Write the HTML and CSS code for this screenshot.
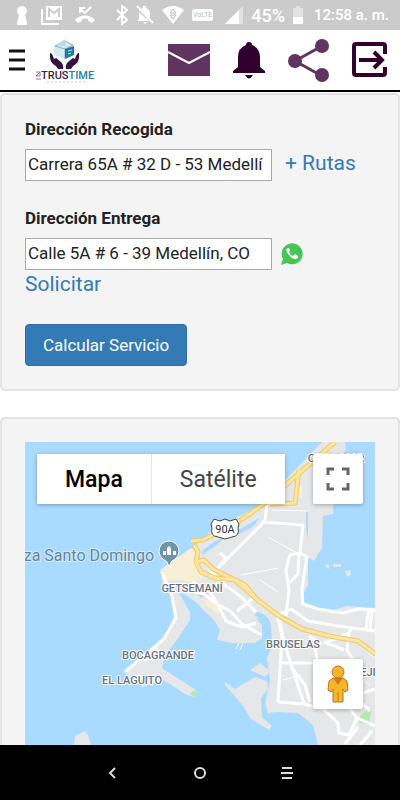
FILE: index.html
```html
<!DOCTYPE html>
<html lang="es">
<head>
    <meta charset="UTF-8">
    <meta name="viewport" content="width=device-width, initial-scale=1.0">
    <title>TrusTime</title>
    <link rel="stylesheet" href="styles.css">
</head>
<body>
    <!-- Status bar -->
    <div class="status-bar">
        <div class="status-left">
            <svg width="14" height="22" viewBox="0 0 14 22"><path d="M4 11a5 5 0 1 1 6 0l2 8v2H2v-2z" fill="#fff"/></svg>
            <svg width="22" height="20" viewBox="0 0 22 20"><path d="M1 4v15h17" fill="none" stroke="#fff" stroke-width="2"/><path d="M5 1h16v14H5z" fill="#fff"/><path d="M8 12V4l5 4 5-4v8" fill="none" stroke="#ccc" stroke-width="2"/></svg>
            <svg width="20" height="20" viewBox="0 0 20 20"><path d="M5 4l5 4 6-6M5 8V3h5" fill="none" stroke="#fff" stroke-width="2"/><path d="M0 15c4-6 16-6 20 0l-3 3-4-2v-2q-3-1-6 0v2l-4 2z" fill="#fff"/></svg>
        </div>
        <div class="status-right">
            <svg width="12" height="20" viewBox="0 0 12 20"><path d="M1 5l10 10-5 4V1l5 4L1 15" fill="none" stroke="#fff" stroke-width="2"/></svg>
            <svg width="18" height="20" viewBox="0 0 18 20"><path d="M3 14V9q0-5 4-6V1h3v2q4 1 4 6v5l2 2H1z M7 17h4l-2 2z" fill="#fff"/><path d="M0 2l18 17" stroke="#ccc" stroke-width="3"/><path d="M1 1l16 17" stroke="#fff" stroke-width="2"/></svg>
            <svg width="22" height="18" viewBox="0 0 22 18"><path d="M0 4q11-8 22 0L11 18z" fill="#fff"/><path d="M8 7l3-4 3 4zM8 9l3 4 3-4z" fill="none" stroke="#bbb"/></svg>
            <span class="volte">VoLTE</span>
            <svg class="signal" width="18" height="18" viewBox="0 0 18 18"><path d="M0 18L18 0v18z" fill="#e2e2e2"/><path d="M0 18L14 4v14z" fill="#fff"/></svg>
            <span class="battery-text">45%</span>
            <svg width="10" height="18" viewBox="0 0 10 18"><path d="M0 2h3V0h4v2h3v16H0z" fill="#e2e2e2"/><path d="M0 11h10v7H0z" fill="#fff"/></svg>
            <span class="clock">12:58 a. m.</span>
        </div>
    </div>

    <!-- App header -->
    <header class="header">
        <div class="brand">
            <button class="icon-button" aria-label="Menu">
                <svg width="16" height="22" viewBox="0 0 16 22"><path d="M0 2h16M0 11h16M0 20h16" stroke="#111" stroke-width="3"/></svg>
            </button>
            <a href="#" class="logo" aria-label="TrusTime">
                <svg width="62" height="45" viewBox="0 0 62 45">
                    <path d="M19 8l9-5 10 4v10l-8 4-11-4z" fill="#d9ebf1"/>
                    <path d="M20 8l10 3 8-4-8-4zM30 11v10" fill="none" stroke="#87afc0"/>
                    <path d="M30 11l9-3v9l-9 4z" fill="#1c7ca5"/>
                    <path d="M22 7l8-6 1 8" fill="#b8dbe7"/>
                    <path d="M33 13l4-1M33 16l3-1" stroke="#c9e8f2"/>
                    <path d="M15 15q2-1 4 6l2-1 5 4q3 3 2 7h-5q-1-3-5-5-4-4-3-11zM44 15q-2-1-4 6l-2-1-5 4q-3 3-2 7h5q1-3 5-5 4-4 3-11z" fill="#32163f"/>
                    <path d="M1 34h4v4H1l4-4M1 41h5" fill="none" stroke="#8a7c96"/>
                    <text x="6" y="41" class="logo-text"><tspan fill="#3c2348">TRUS</tspan><tspan fill="#2483ac">TIME</tspan></text>
                    <path d="M12 44h38" stroke="#ccc" stroke-dasharray="2 2"/>
                </svg>
            </a>
        </div>
        <nav class="actions">
            <a href="#" aria-label="Mensajes">
                <svg width="42" height="32" viewBox="0 0 42 32"><path d="M0 0h42v32H0z" fill="#60345f"/><path d="M0 8l21 11L42 8" fill="none" stroke="#fff" stroke-width="2"/></svg>
            </a>
            <a href="#" aria-label="Notificaciones">
                <svg width="34" height="38" viewBox="0 0 34 38"><path d="M14 4a3 3 0 1 1 6 0q8 3 8 12v10l5 4v2H1v-2l5-4V16q0-9 8-12zM13 34h8q-4 7-8 0z" fill="#32002f"/></svg>
            </a>
            <a href="#" aria-label="Compartir">
                <svg width="42" height="43" viewBox="0 0 42 43"><path d="M34 7L7 22l27 15" fill="none" stroke="#60345f" stroke-width="3"/><g fill="#60345f"><circle cx="7" cy="22" r="7"/><circle cx="34" cy="7" r="7"/><circle cx="34" cy="36" r="7"/></g></svg>
            </a>
            <a href="#" aria-label="Salir">
                <svg width="36" height="36" viewBox="0 0 36 36"><path d="M33 12V4q0-2-2-2H4Q2 2 2 4v27q0 2 2 2h27q2 0 2-2v-6" fill="none" stroke="#32002f" stroke-width="4"/><path d="M7 18h23M22 10l8 8-8 8" fill="none" stroke="#32002f" stroke-width="4"/></svg>
            </a>
        </nav>
    </header>

    <main class="content">
        <form class="panel" onsubmit="return false">
            <div class="field">
                <label for="recogida">Dirección Recogida</label>
                <div class="field-row">
                    <input type="text" id="recogida" value="Carrera 65A # 32 D - 53 Medellí">
                    <a href="#" class="link">+ Rutas</a>
                </div>
            </div>
            <div class="field">
                <label for="entrega">Dirección Entrega</label>
                <div class="field-row whatsapp-row">
                    <input type="text" id="entrega" value="Calle 5A # 6 - 39 Medellín, CO">
                    <a href="#" class="whatsapp" aria-label="WhatsApp">
                        <svg width="22" height="22" viewBox="0 0 22 22"><path d="M0 22l2-6A10.500 10.500 0 1 1 6 20z" fill="#45c655"/><path d="M7 5q-4 2 1 7 5 6 9 3v-2l-3-2-2 2q-3-1-4-4l1-1-1-3z" fill="#fff"/></svg>
                    </a>
                </div>
                <a href="#" class="link">Solicitar</a>
            </div>
            <button class="btn-primary">Calcular Servicio</button>
        </form>

        <section class="panel map-panel">
            <div class="map">
                <svg class="map-canvas" viewBox="25 442 350 303" preserveAspectRatio="xMidYMin slice">
                    <path d="M25 442h350v303H25z" fill="#a9daff"/>
                    <!-- land -->
                    <g fill="#e6e7e8">
                        <path d="M322 442H345L346 450 338 460V500L333 505V514L323 516 322 548 314 561 308 557V585L303 594 304 603 313 607 333 610 347 606 375 608V745H318L313 725 298 713 277 712 268 713 265 703 268 690 270 680 267 658 272 645 271 628 267 619 256 618 262 625 262 638 255 643 233 643 217 640 220 630 214 620 205 612 196 602 184 594 172 592 163 588 161 575 160 570 193 547 210 532 262 504Z"/>
                        <path d="M162 571L170 595 174 616 167 633 153 647 140 661 123 671 130 678 143 687 163 680 187 695 195 697 196 690 162 668 165 655 177 640 190 620 190 612 182 598 172 582Z"/>
                        <path d="M225 685v-3l10 7 20-12 12 4 1 8-7 9 1 19 10 9-3 4-18-11-8-13-10-12zM260 663l10 8-5 6-15-7z"/>
                        <path d="M74 745l1-9 10-5 3 4 3 10zM326 564l3 1v4l-4-3zM333 564h8v3h-7zM345 571l5-1 1 5-4 2z"/>
                    </g>
                    <!-- built-up areas -->
                    <path d="M163 568l28-20 7 10 5 20-8 6-14-4-17 1zM204 600h10l10 9-5 5-12-8zM298 486h4v12l-5-2z" fill="#f7efd6"/>
                    <path d="M190 694l4-4 3 4-3 3zM360 716l4-4 8-4-3 16-10-1z" fill="#b9e6b5"/>
                    <!-- inner water -->
                    <path d="M203 550l12-9 11-4-12 10-12 8zM237 531l22-13-5 8-16 9zM192 589l12-2 5 6-8 5zM257 612q12 2 14 13l-2 6-6-11-9-5zM306 511h2v28l-2-9z" fill="#a9daff"/>
                    <!-- streets -->
                    <g fill="none" stroke="#fff" stroke-width="3" stroke-linejoin="round">
                        <path d="M162 572l10 24 4 22-12 21-38 32M157 648l-12 13M267 504l-2 17-49 49M220 553l6 5-14 18M262 522l41 3-3 28-10 2-4 15 3 20-3 26M300 553l7 4-5 32 1 15 15 5 25 4 15-4 17 1"/>
                        <path d="M299 554l-1 20-9 9M205 560l10 17 12 10M182 584l12 8 10 2 13 10 13 7 12 13 20 11M193 582l17 10 8 13 8 16 16 6 14-4M228 587l13 10 15 15M237 611l15-12M277 614l5 23-4 65 26 2-20-62-5-25"/>
                        <path d="M279 615l12-6 17 12 30 5 37 5M282 663h31M318 666l-3-18 6-5-12-7M325 643l24-10 3-5M349 632l-2 18 8 13M324 642l20 8M304 704l19 5 15 14 1 10 10 2 8-17 18 8M349 707l9 13M360 694l15-5M362 703l8 8M358 727l-13 17M372 731l-12 14M291 667l14 18 5 17M369 609l-3 19M372 611l-2 18"/>
                    </g>
                    <g fill="none" stroke="#fff">
                        <path d="M272 510l37 1M268 537l29 16M241 575l38-7M260 580l18 12M240 650l3-7M236 649l3-6M283 680l18-5M330 660l40 25M355 640l20 18"/>
                    </g>
                    <!-- highways -->
                    <g fill="none" stroke-linejoin="round">
                        <path d="M191 541l12-1 38-20 24-17 70-61M299 470l-4 33-25 1M194 545l4 7-2 10 5 10 14 6 20 2 24 21 20 15 23 13 27 7 29 5 19 14M196 562l8-2 9 9 12 6 20 10 14 17" stroke="#e9c975" stroke-width="5"/>
                        <path d="M191 541l12-1 38-20 24-17 70-61M299 470l-4 33-25 1M194 545l4 7-2 10 5 10 14 6 20 2 24 21 20 15 23 13 27 7 29 5 19 14M196 562l8-2 9 9 12 6 20 10 14 17" stroke="#ffe69a" stroke-width="3"/>
                    </g>
                    <!-- route shield -->
                    <path d="M214 519l6 2 5-2 5 2 6-2 3 5-1 4q2 8-6 9l-7 2-7-2q-8-1-6-9l-1-4z" fill="#fff" stroke="#444"/>
                    <text x="225" y="533" class="shield-text">90A</text>
                    <!-- place pin -->
                    <path d="M169 567q-1-6-6-8a10 10 0 1 1 12 0q-5 2-6 8z" fill="#6f94a9" stroke="#fff"/>
                    <path d="M163 555v-4h3v4zm4 0v-7l2-2 2 2v7zm6 0v-4h3v4z" fill="#fff"/>
                    <text x="154" y="561" class="poi">za Santo Domingo</text>
                    <g class="area">
                        <text x="192" y="592">GETSEMANÍ</text>
                        <text x="158" y="659">BOCAGRANDE</text>
                        <text x="132" y="684">EL LAGUITO</text>
                        <text x="293" y="648">BRUSELAS</text>
                        <text x="336" y="462">CIELO MAR</text>
                        <text x="368" y="676">EJI</text>
                    </g>
                </svg>
                <div class="map-overlay">
                    <div class="map-top">
                        <div class="map-types">
                            <button class="active">Mapa</button>
                            <button>Satélite</button>
                        </div>
                        <button class="map-control" aria-label="Pantalla completa">
                            <svg width="24" height="24" viewBox="0 0 24 24"><path d="M2 8V2h6M16 2h6v6M22 16v6h-6M8 22H2v-6" fill="none" stroke="#666" stroke-width="3"/></svg>
                        </button>
                    </div>
                    <button class="map-control" aria-label="Street View">
                        <svg width="22" height="38" viewBox="0 0 22 38"><path d="M6 13h10l4 3 1 9-3 2-2-3v13H6V24l-2 3-3-2 1-9z" fill="#f9b529" stroke="#aa7b27"/><path d="M6 13h10l-5 7z" fill="#d67a1b"/><path d="M11 27v10" stroke="#bd821d"/><circle cx="11" cy="7" r="6" fill="#f9b529" stroke="#aa7b27"/></svg>
                    </button>
                </div>
            </div>
        </section>
    </main>

    <!-- Phone navigation -->
    <nav class="phone-nav">
        <button class="icon-button" aria-label="Atrás"><svg width="14" height="14" viewBox="0 0 14 14"><path d="M9 2L4 7l5 5" fill="none" stroke="#ddd" stroke-width="2"/></svg></button>
        <button class="icon-button" aria-label="Inicio"><svg width="14" height="14" viewBox="0 0 14 14"><circle cx="7" cy="7" r="5" fill="none" stroke="#ddd" stroke-width="2"/></svg></button>
        <button class="icon-button" aria-label="Recientes"><svg width="14" height="14" viewBox="0 0 14 14"><path d="M2 2h10M1 7h12M2 12h10" stroke="#ddd" stroke-width="2"/></svg></button>
    </nav>
</body>
</html>
```
FILE: styles.css
```css
* { box-sizing: border-box; }
body { margin: 0; height: 100vh; display: flex; flex-direction: column; font-family: Roboto, sans-serif; color: #222; background: #fff; }
button { font-family: inherit; cursor: pointer; }
svg { display: block; }
a { text-decoration: none; }

.status-bar { flex: none; height: 30px; padding: 0 11px 0 15px; display: flex; align-items: center; justify-content: space-between; background: #cbcbcb; color: #fff; }
.status-left { display: flex; align-items: center; gap: 12px; }
.status-right { display: flex; align-items: center; gap: 8px; }
.volte { padding: 0 1px; border-radius: 2px; background: #fff; color: #bbb; font-size: 7px; line-height: 12px; }
.signal { margin-left: 4px; }
.battery-text { font-size: 18px; font-weight: 500; }
.clock { margin-left: 3px; font-size: 15px; font-weight: 500; }

.header { flex: none; height: 62px; padding: 0 12px 0 9px; display: flex; align-items: center; justify-content: space-between; border-bottom: 2px solid #000; }
.brand { display: flex; align-items: center; gap: 10px; }
.icon-button { padding: 0; border: 0; background: none; }
.logo-text { font-size: 11px; font-weight: 500; }
.actions { display: flex; align-items: center; gap: 22px; }

.content { flex: 1; min-height: 0; overflow: hidden; display: flex; flex-direction: column; gap: 26px; padding-top: 1px; }
.panel { flex: none; padding: 23px; border: 2px solid #e3e3e3; border-radius: 5px; background: #f4f4f4; }
.field { margin-bottom: 26px; }
.field label { display: block; margin-bottom: 9px; font-size: 17px; font-weight: 700; line-height: 22px; }
.field-row { display: flex; align-items: flex-start; gap: 13px; }
.whatsapp-row { align-items: center; gap: 9px; }
.field input { width: 247px; height: 32px; padding: 0 2px 2px; border: 1px solid #aaa; background: #fff; color: #222; font-family: inherit; font-size: 17px; }
.link { color: #337ab7; font-size: 21px; line-height: 28px; }
.btn-primary { display: block; height: 42px; padding: 0 17px; border: 1px solid #2e6da4; border-radius: 4px; background: #337ab7; color: #fff; font-size: 17px; }

.map-panel { flex: 1; min-height: 0; padding-bottom: 0; border-bottom: 0; border-radius: 5px 5px 0 0; }
.map { position: relative; height: 100%; overflow: hidden; }
.map-canvas { width: 100%; height: 100%; }
.map-overlay { position: absolute; inset: 0; padding: 12px 12px 36px; display: flex; flex-direction: column; justify-content: space-between; align-items: flex-end; }
.map-top { width: 100%; display: flex; justify-content: space-between; }
.map-types { display: flex; border-radius: 2px; box-shadow: 0 1px 4px rgba(0, 0, 0, 0.3); }
.map-types button { height: 50px; padding: 0 28px; border: 0; background: #fff; color: #444; font-size: 23px; }
.map-types button + button { border-left: 1px solid #e6e6e6; }
.map-types .active { color: #000; font-weight: 500; }
.map-control { width: 50px; height: 50px; padding: 0; display: flex; align-items: center; justify-content: center; border: 0; border-radius: 2px; background: #fff; box-shadow: 0 1px 4px rgba(0, 0, 0, 0.3); }
.map text { stroke: #fff; stroke-width: 2px; paint-order: stroke; }
.map .poi { fill: #63869b; font-size: 16px; text-anchor: end; stroke: #d5ecfc; }
.map .area { fill: #68717e; font-size: 11px; font-weight: 500; text-anchor: middle; }
.map .shield-text { fill: #333; font-size: 11px; text-anchor: middle; stroke: none; }

.phone-nav { flex: none; height: 55px; padding: 0 106px; display: flex; align-items: center; justify-content: space-between; background: #000; }
```
